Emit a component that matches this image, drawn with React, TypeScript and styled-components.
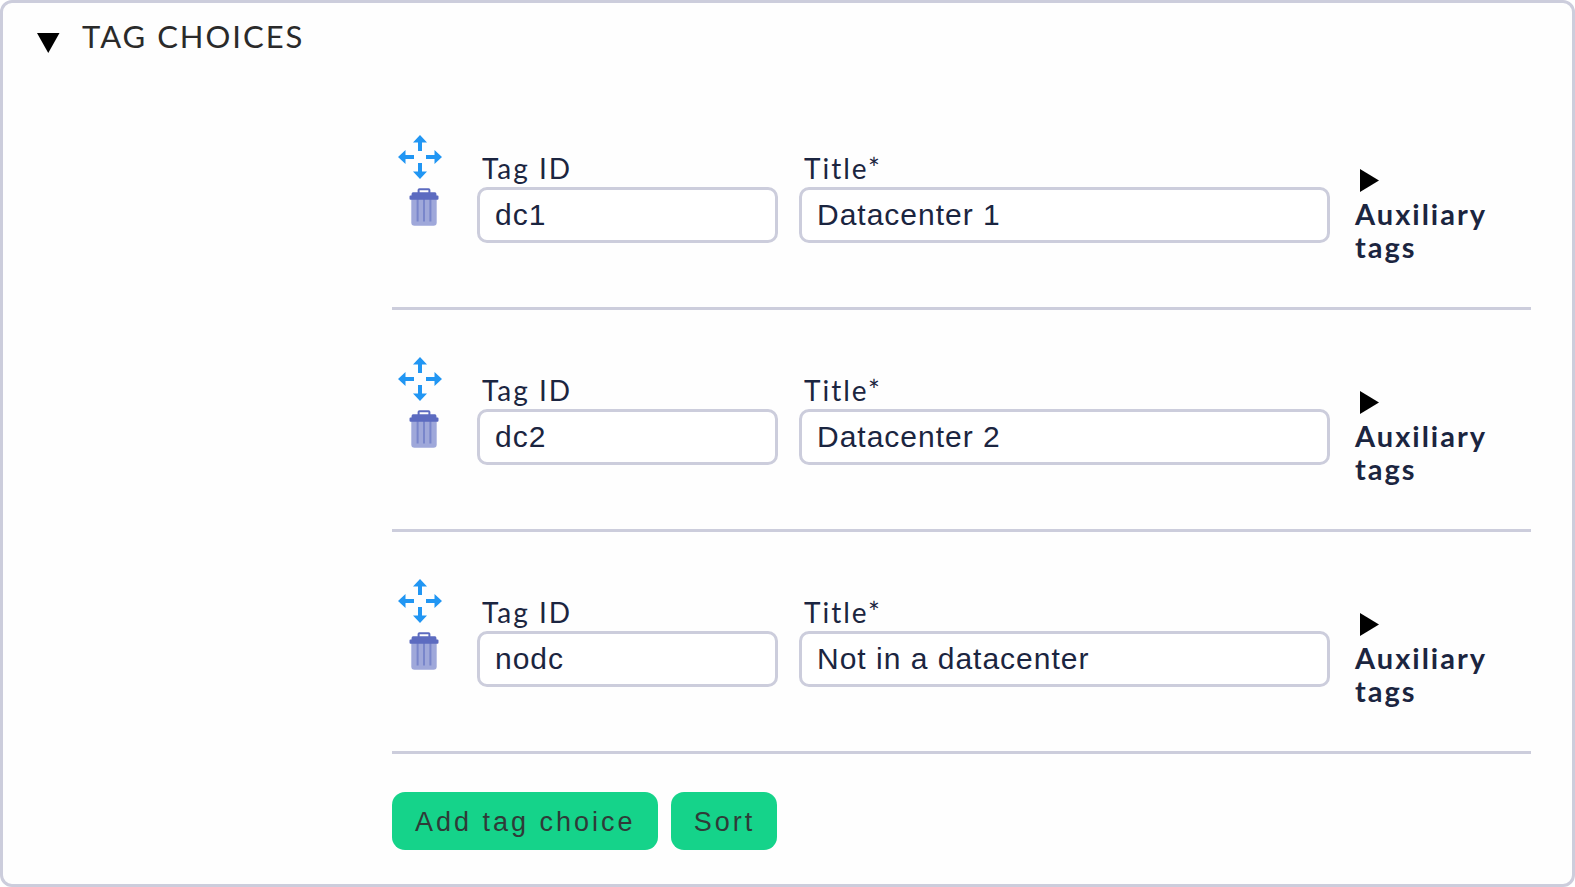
import React, { useState } from "react";
import styled, { createGlobalStyle } from "styled-components";

const GlobalStyle = createGlobalStyle`
  * { box-sizing: border-box; }
  body {
    margin: 0;
    background: #fff;
    color: #1b2540;
    font-family: Lato, "Liberation Sans", sans-serif;
  }
`;

const Panel = styled.section`
  background: #fefefe;
  border: 3px solid #cccddc;
  border-radius: 12px;
  padding: 15px 41px 34px 34px;
`;

const Heading = styled.h2`
  margin: 0;
  font-weight: 400;
`;

const HeadingToggle = styled.button`
  display: flex;
  align-items: center;
  gap: 22px;
  padding: 0;
  border: 0;
  background: none;
  color: #2a2a2a;
  font: 400 31px/36px Lato, "Liberation Sans", sans-serif;
  letter-spacing: 2px;
  text-transform: uppercase;
  cursor: pointer;
  svg { margin-top: 14px; }
`;

const Choices = styled.div`
  margin: 34px 0 0 355px;
`;

const ChoiceList = styled.ul`
  list-style: none;
  margin: 0;
  padding: 0;
`;

const ChoiceRow = styled.li`
  display: flex;
  align-items: flex-start;
  height: 222px;
  padding-top: 47px;
  border-bottom: 3px solid #cccddc;
`;

const RowActions = styled.div`
  display: flex;
  flex-direction: column;
  gap: 9px;
  width: 85px;
  flex: none;
  padding-left: 4px;
`;

const IconButton = styled.button`
  display: flex;
  justify-content: center;
  width: 48px;
  padding: 0;
  border: 0;
  background: none;
  cursor: pointer;
`;

const DeleteButton = styled(IconButton)`
  width: 56px;
`;

const Field = styled.div<{ $grow?: boolean }>`
  display: flex;
  flex-direction: column;
  flex: ${(p) => (p.$grow ? "1 1 0" : "0 0 301px")};
  min-width: 0;
  padding-top: 17px;
  margin-right: ${(p) => (p.$grow ? "25px" : "21px")};
`;

const FieldLabel = styled.label`
  padding-left: 5px;
  margin-bottom: 2px;
  font-size: 28px;
  line-height: 33px;
  letter-spacing: 2px;
`;

const TextInput = styled.input`
  width: 100%;
  height: 56px;
  padding: 0 15px;
  border: 3px solid #cccddc;
  border-radius: 10px;
  background: #fff;
  color: #1b2540;
  font: 400 30px "Liberation Sans", Arial, sans-serif;
  letter-spacing: 1px;
`;

const AuxToggle = styled.button`
  display: flex;
  flex-direction: column;
  align-items: flex-start;
  gap: 5px;
  flex: 0 0 176px;
  padding: 34px 40px 0 0;
  border: 0;
  background: none;
  color: #1b2540;
  font: 700 29px/33px Lato, "Liberation Sans", sans-serif;
  letter-spacing: 2px;
  text-align: left;
  cursor: pointer;
  svg { margin-left: 5px; }
`;

const Footer = styled.div`
  display: flex;
  gap: 13px;
  margin-top: 38px;
`;

const ActionButton = styled.button`
  height: 58px;
  padding: 2px 22px 0 23px;
  border: 0;
  border-radius: 13px;
  background: #15d38a;
  color: #2f3b38;
  font: 400 27px "Liberation Sans", Arial, sans-serif;
  letter-spacing: 3px;
  cursor: pointer;
`;

const MoveIcon = () => (
  <svg width="44" height="44" viewBox="0 0 44 44" fill="#2196f3" aria-hidden="true">
    <path d="M22 0L29 7.5H24V16H20V7.5H15Z" />
    <path d="M22 44L15 36.5H20V28H24V36.5H29Z" />
    <path d="M0 22L7.5 15V20H16V24H7.5V29Z" />
    <path d="M44 22L36.5 29V24H28V20H36.5V15Z" />
  </svg>
);

const TrashIcon = () => (
  <svg width="30" height="38" viewBox="0 0 30 38" aria-hidden="true">
    <path d="M2.300 10H27.700V34.500Q27.700 37.700 24.500 37.700H5.500Q2.300 37.700 2.300 34.500Z" fill="#9fa8da" />
    <path d="M8.600 11V33.500M15 11V33.500M21.400 11V33.500" stroke="#7986cb" strokeWidth="2" />
    <path d="M9.600 5V2Q9.600 1.200 10.400 1.200H19.600Q20.400 1.200 20.400 2V5" fill="none" stroke="#5c6bc0" strokeWidth="2" />
    <path d="M4 4.200H26Q27.500 4.200 27.500 7.500H28.500Q29.500 7.500 29.500 8.500V10.500Q29.500 11.800 28.500 11.800H1.500Q0.500 11.800 0.500 10.500V8.500Q0.500 7.500 1.500 7.500H2.500Q2.500 4.200 4 4.200Z" fill="#5c6bc0" />
  </svg>
);

const ArrowDown = () => (
  <svg width="23" height="20" viewBox="0 0 23 20" aria-hidden="true">
    <path d="M0 0H22.500L11.250 20Z" fill="#000" />
  </svg>
);

const ArrowRight = () => (
  <svg width="19" height="23" viewBox="0 0 19 23" aria-hidden="true">
    <path d="M0 0V23L19 11.500Z" fill="#000" />
  </svg>
);

const initialChoices = [
  { key: 1, id: "dc1", title: "Datacenter 1" },
  { key: 2, id: "dc2", title: "Datacenter 2" },
  { key: 3, id: "nodc", title: "Not in a datacenter" },
];

export default function App() {
  const [open, setOpen] = useState(true);
  const [choices, setChoices] = useState(initialChoices);

  const update = (key: number, patch: { id?: string; title?: string }) =>
    setChoices((list) => list.map((c) => (c.key === key ? { ...c, ...patch } : c)));
  const remove = (key: number) => setChoices((list) => list.filter((c) => c.key !== key));
  const add = () =>
    setChoices((list) => [
      ...list,
      { key: Math.max(0, ...list.map((c) => c.key)) + 1, id: "", title: "" },
    ]);
  const sort = () => setChoices((list) => [...list].sort((a, b) => a.title.localeCompare(b.title)));

  return (
    <>
      <GlobalStyle />
      <Panel>
        <Heading>
          <HeadingToggle type="button" aria-expanded={open} onClick={() => setOpen(!open)}>
            {open ? <ArrowDown /> : <ArrowRight />}
            Tag choices
          </HeadingToggle>
        </Heading>
        {open && (
          <Choices>
            <ChoiceList>
              {choices.map((c) => (
                <ChoiceRow key={c.key}>
                  <RowActions>
                    <IconButton type="button" aria-label="Move">
                      <MoveIcon />
                    </IconButton>
                    <DeleteButton type="button" aria-label="Delete" onClick={() => remove(c.key)}>
                      <TrashIcon />
                    </DeleteButton>
                  </RowActions>
                  <Field>
                    <FieldLabel htmlFor={`id-${c.key}`}>Tag ID</FieldLabel>
                    <TextInput
                      id={`id-${c.key}`}
                      value={c.id}
                      onChange={(e) => update(c.key, { id: e.target.value })}
                    />
                  </Field>
                  <Field $grow>
                    <FieldLabel htmlFor={`title-${c.key}`}>Title*</FieldLabel>
                    <TextInput
                      id={`title-${c.key}`}
                      value={c.title}
                      onChange={(e) => update(c.key, { title: e.target.value })}
                    />
                  </Field>
                  <AuxToggle type="button" aria-expanded={false}>
                    <ArrowRight />
                    Auxiliary tags
                  </AuxToggle>
                </ChoiceRow>
              ))}
            </ChoiceList>
            <Footer>
              <ActionButton type="button" onClick={add}>Add tag choice</ActionButton>
              <ActionButton type="button" onClick={sort}>Sort</ActionButton>
            </Footer>
          </Choices>
        )}
      </Panel>
    </>
  );
}
